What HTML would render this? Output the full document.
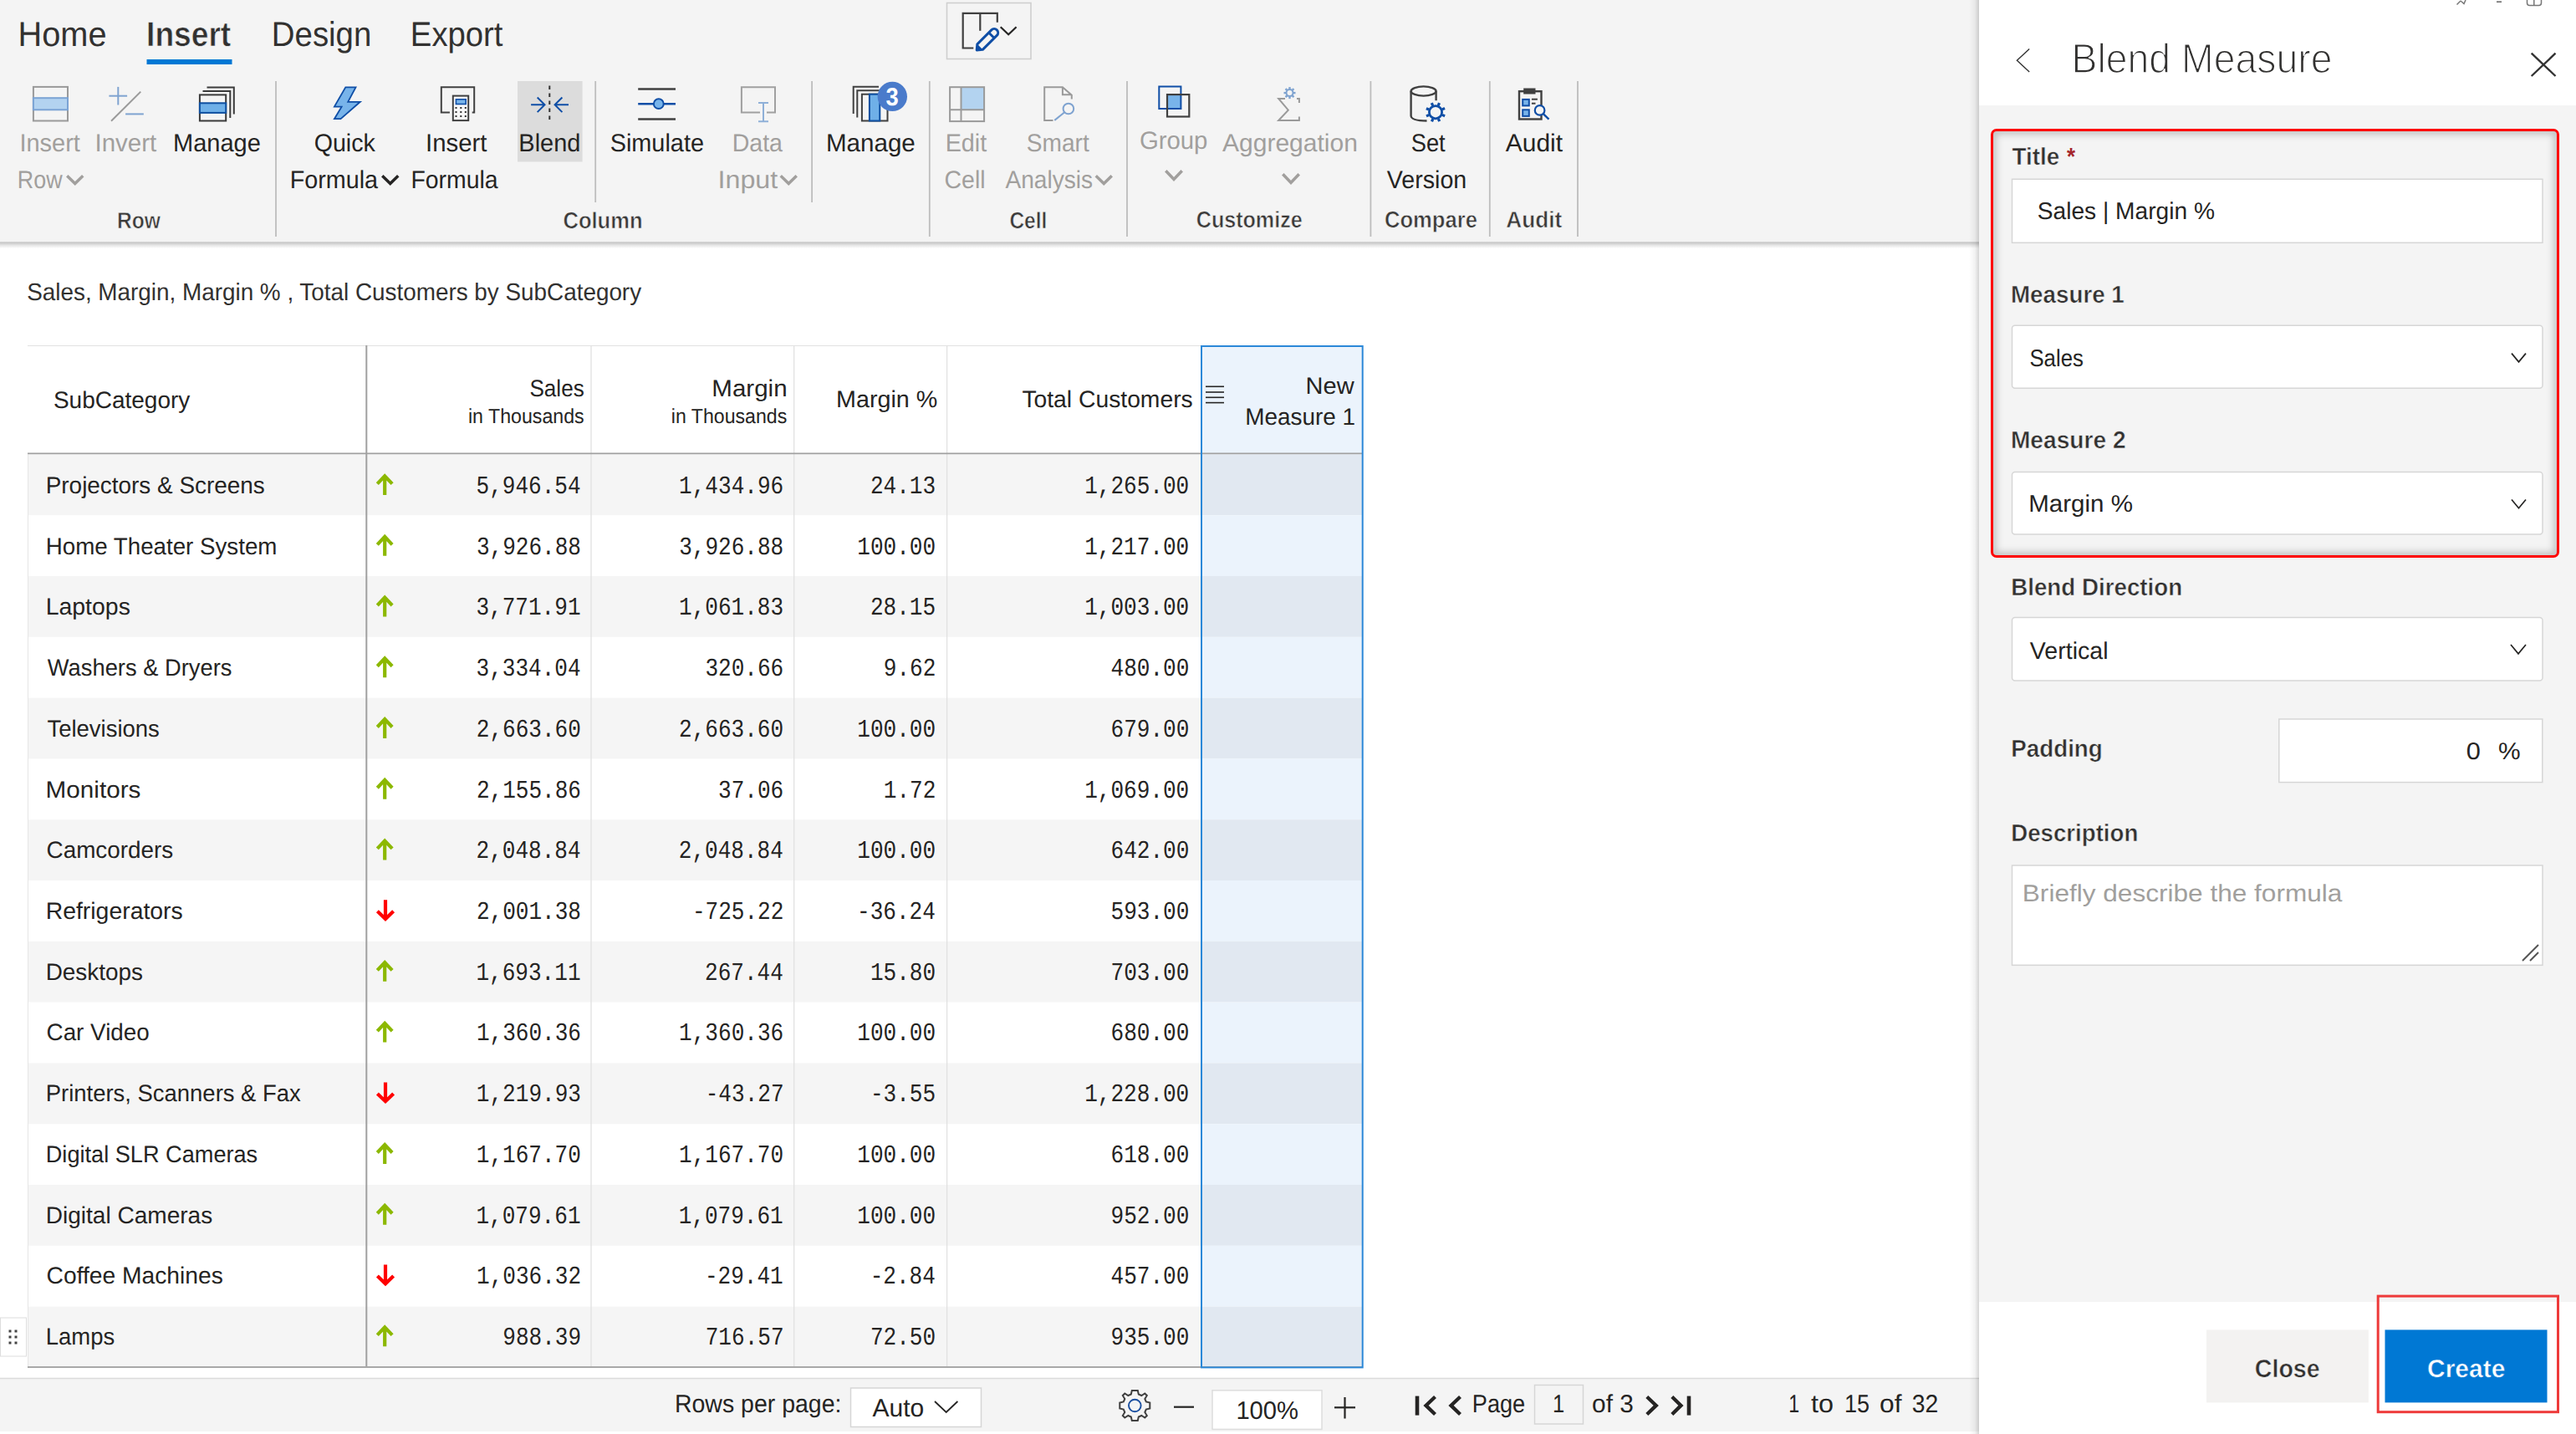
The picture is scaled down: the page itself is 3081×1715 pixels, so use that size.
<!DOCTYPE html>
<html><head><meta charset="utf-8"><title>Blend Measure</title>
<style>
html,body{margin:0;padding:0;background:#fff;overflow:hidden;}
body{width:3081px;height:1715px;font-family:"Liberation Sans",sans-serif;}
svg{display:block;}
</style></head><body>
<svg width="3081" height="1715" viewBox="0 0 3081 1715" text-rendering="geometricPrecision">
<rect x="0.00" y="0.00" width="3081.00" height="1715.00" fill="#ffffff" />
<rect x="0.00" y="0.00" width="2367.00" height="289.00" fill="#f4f4f4" />
<defs><linearGradient id="rsh" x1="0" y1="0" x2="0" y2="1"><stop offset="0" stop-color="#d6d6d6"/><stop offset="0.2" stop-color="#cbcbcb"/><stop offset="0.55" stop-color="#e6e6e6"/><stop offset="1" stop-color="#ffffff"/></linearGradient><linearGradient id="psh" x1="0" y1="0" x2="1" y2="0"><stop offset="0" stop-color="#000000" stop-opacity="0"/><stop offset="0.6" stop-color="#000000" stop-opacity="0.05"/><stop offset="1" stop-color="#000000" stop-opacity="0.17"/></linearGradient><filter id="inset" x="-5%" y="-5%" width="110%" height="110%"><feGaussianBlur stdDeviation="4"/></filter></defs>
<rect x="0.00" y="289.00" width="2367.00" height="8.00" fill="url(#rsh)" />
<rect x="0.00" y="1648.00" width="2367.00" height="64.00" fill="#f4f4f4" />
<line x1="0.00" y1="1648.50" x2="2367.00" y2="1648.50" stroke="#dcdcdc" stroke-width="1.50" />
<text transform="translate(21.54 55.30) scale(0.9601 1.0000)" font-family='"Liberation Sans", sans-serif' font-size="41.40" font-weight="400" fill="#323130">Home</text>
<text transform="translate(175.11 55.30) scale(0.8971 1.0000)" font-family='"Liberation Sans", sans-serif' font-size="41.40" font-weight="700" fill="#323130" stroke="#f4f4f4" stroke-width="0.60">Insert</text>
<text transform="translate(324.85 55.30) scale(0.9268 1.0000)" font-family='"Liberation Sans", sans-serif' font-size="41.40" font-weight="400" fill="#323130">Design</text>
<text transform="translate(490.86 55.30) scale(0.9244 1.0000)" font-family='"Liberation Sans", sans-serif' font-size="41.40" font-weight="400" fill="#323130">Export</text>
<rect x="175.50" y="71.00" width="102.00" height="6.00" fill="#0078d4" />
<rect x="1132.50" y="3.50" width="100.50" height="67.00" fill="#f4f4f4" stroke="#cfcfcf" stroke-width="1.6"/>
<path d="M1164.3 57.5 H1151.7 V15.9 H1192.8 V26.8" stroke="#404040" stroke-width="2.20" fill="none" />
<path d="M1172.3 15.9 V36.8" stroke="#404040" stroke-width="2.20" fill="none" />
<g transform="translate(1182 46.2) rotate(-45)"><path d="M-14 -4.6 H10 A4.6 4.6 0 0 1 10 4.6 H-14 L-19.5 0 Z" fill="#f4f4f4" stroke="#0f4ea6" stroke-width="3" stroke-linejoin="round"/><path d="M-14 -4.6 L-19.5 0 L-14 4.6 Z" fill="#0f4ea6"/><line x1="5.5" y1="-4.6" x2="5.5" y2="4.6" stroke="#0f4ea6" stroke-width="3"/></g>
<path d="M1197.50 33.00 L1206.15 41.30 L1214.80 33.00" stroke="#252423" stroke-width="2.20" fill="none" stroke-linecap="square" stroke-linejoin="miter"/>
<text transform="translate(23.43 181.00) scale(0.9723 1.0000)" font-family='"Liberation Sans", sans-serif' font-size="29.80" font-weight="400" fill="#a19f9d">Insert</text>
<text transform="translate(20.80 225.00) scale(0.9018 1.0000)" font-family='"Liberation Sans", sans-serif' font-size="29.80" font-weight="400" fill="#a19f9d">Row</text>
<path d="M81.50 211.50 L89.75 219.60 L98.00 211.50" stroke="#a19f9d" stroke-width="3.50" fill="none" stroke-linecap="square" stroke-linejoin="miter"/>
<text transform="translate(113.49 181.00) scale(0.9891 1.0000)" font-family='"Liberation Sans", sans-serif' font-size="29.80" font-weight="400" fill="#a19f9d">Invert</text>
<text transform="translate(207.02 181.00) scale(0.9736 1.0000)" font-family='"Liberation Sans", sans-serif' font-size="29.80" font-weight="400" fill="#252423">Manage</text>
<text transform="translate(140.05 273.00) scale(0.8940 1.0000)" font-family='"Liberation Sans", sans-serif' font-size="27.50" font-weight="700" fill="#3b3a39" stroke="#f4f4f4" stroke-width="0.60">Row</text>
<line x1="330.00" y1="97.00" x2="330.00" y2="283.00" stroke="#bdbdbd" stroke-width="1.80" />
<rect x="619.00" y="97.00" width="77.60" height="96.50" fill="#dcdcdc" />
<text transform="translate(375.66 181.00) scale(0.9599 1.0000)" font-family='"Liberation Sans", sans-serif' font-size="29.80" font-weight="400" fill="#252423">Quick</text>
<text transform="translate(346.64 225.00) scale(0.9641 1.0000)" font-family='"Liberation Sans", sans-serif' font-size="29.80" font-weight="400" fill="#252423">Formula</text>
<path d="M458.50 211.50 L466.75 219.60 L475.00 211.50" stroke="#252423" stroke-width="3.50" fill="none" stroke-linecap="square" stroke-linejoin="miter"/>
<text transform="translate(509.10 181.00) scale(0.9849 1.0000)" font-family='"Liberation Sans", sans-serif' font-size="29.80" font-weight="400" fill="#252423">Insert</text>
<text transform="translate(491.47 225.00) scale(0.9529 1.0000)" font-family='"Liberation Sans", sans-serif' font-size="29.80" font-weight="400" fill="#252423">Formula</text>
<text transform="translate(620.33 181.00) scale(0.9715 1.0000)" font-family='"Liberation Sans", sans-serif' font-size="29.80" font-weight="400" fill="#252423">Blend</text>
<text transform="translate(673.45 273.00) scale(0.9294 1.0000)" font-family='"Liberation Sans", sans-serif' font-size="27.50" font-weight="700" fill="#3b3a39" stroke="#f4f4f4" stroke-width="0.60">Column</text>
<line x1="712.20" y1="97.00" x2="712.20" y2="242.00" stroke="#bdbdbd" stroke-width="1.80" />
<text transform="translate(729.67 181.00) scale(0.9685 1.0000)" font-family='"Liberation Sans", sans-serif' font-size="29.80" font-weight="400" fill="#252423">Simulate</text>
<text transform="translate(875.66 181.00) scale(0.9588 1.0000)" font-family='"Liberation Sans", sans-serif' font-size="29.80" font-weight="400" fill="#a19f9d">Data</text>
<text transform="translate(858.53 225.00) scale(1.0817 1.0000)" font-family='"Liberation Sans", sans-serif' font-size="29.80" font-weight="400" fill="#a19f9d">Input</text>
<path d="M935.00 211.50 L943.25 219.60 L951.50 211.50" stroke="#a19f9d" stroke-width="3.50" fill="none" stroke-linecap="square" stroke-linejoin="miter"/>
<line x1="971.10" y1="97.00" x2="971.10" y2="242.00" stroke="#bdbdbd" stroke-width="1.80" />
<text transform="translate(987.98 181.00) scale(0.9919 1.0000)" font-family='"Liberation Sans", sans-serif' font-size="29.80" font-weight="400" fill="#252423">Manage</text>
<line x1="1111.80" y1="97.00" x2="1111.80" y2="283.00" stroke="#bdbdbd" stroke-width="1.80" />
<text transform="translate(1130.64 181.00) scale(0.9652 1.0000)" font-family='"Liberation Sans", sans-serif' font-size="29.80" font-weight="400" fill="#a19f9d">Edit</text>
<text transform="translate(1129.55 225.00) scale(0.9555 1.0000)" font-family='"Liberation Sans", sans-serif' font-size="29.80" font-weight="400" fill="#a19f9d">Cell</text>
<text transform="translate(1227.71 181.00) scale(0.9436 1.0000)" font-family='"Liberation Sans", sans-serif' font-size="29.80" font-weight="400" fill="#a19f9d">Smart</text>
<text transform="translate(1202.44 225.00) scale(0.9423 1.0000)" font-family='"Liberation Sans", sans-serif' font-size="29.80" font-weight="400" fill="#a19f9d">Analysis</text>
<path d="M1312.00 211.50 L1320.25 219.60 L1328.50 211.50" stroke="#a19f9d" stroke-width="3.50" fill="none" stroke-linecap="square" stroke-linejoin="miter"/>
<text transform="translate(1207.40 273.00) scale(0.8911 1.0000)" font-family='"Liberation Sans", sans-serif' font-size="27.50" font-weight="700" fill="#3b3a39" stroke="#f4f4f4" stroke-width="0.60">Cell</text>
<line x1="1348.00" y1="97.00" x2="1348.00" y2="283.00" stroke="#bdbdbd" stroke-width="1.80" />
<text transform="translate(1362.93 178.00) scale(0.9841 1.0000)" font-family='"Liberation Sans", sans-serif' font-size="29.80" font-weight="400" fill="#a19f9d">Group</text>
<path d="M1395.50 205.50 L1404.00 214.50 L1412.50 205.50" stroke="#a19f9d" stroke-width="3.50" fill="none" stroke-linecap="square" stroke-linejoin="miter"/>
<text transform="translate(1461.94 180.70) scale(1.0081 1.0000)" font-family='"Liberation Sans", sans-serif' font-size="29.80" font-weight="400" fill="#a19f9d">Aggregation</text>
<path d="M1535.50 209.50 L1544.00 218.50 L1552.50 209.50" stroke="#a19f9d" stroke-width="3.50" fill="none" stroke-linecap="square" stroke-linejoin="miter"/>
<text transform="translate(1430.77 271.70) scale(0.9126 1.0000)" font-family='"Liberation Sans", sans-serif' font-size="27.50" font-weight="700" fill="#3b3a39" stroke="#f4f4f4" stroke-width="0.60">Customize</text>
<line x1="1639.40" y1="97.00" x2="1639.40" y2="283.00" stroke="#bdbdbd" stroke-width="1.80" />
<text transform="translate(1687.75 181.00) scale(0.9154 1.0000)" font-family='"Liberation Sans", sans-serif' font-size="29.80" font-weight="400" fill="#252423">Set</text>
<text transform="translate(1658.86 225.00) scale(0.9599 1.0000)" font-family='"Liberation Sans", sans-serif' font-size="29.80" font-weight="400" fill="#252423">Version</text>
<text transform="translate(1655.95 272.00) scale(0.9306 1.0000)" font-family='"Liberation Sans", sans-serif' font-size="27.50" font-weight="700" fill="#3b3a39" stroke="#f4f4f4" stroke-width="0.60">Compare</text>
<line x1="1781.80" y1="97.00" x2="1781.80" y2="283.00" stroke="#bdbdbd" stroke-width="1.80" />
<text transform="translate(1800.74 181.00) scale(1.0052 1.0000)" font-family='"Liberation Sans", sans-serif' font-size="29.80" font-weight="400" fill="#252423">Audit</text>
<text transform="translate(1801.34 272.00) scale(0.9531 1.0000)" font-family='"Liberation Sans", sans-serif' font-size="27.50" font-weight="700" fill="#3b3a39" stroke="#f4f4f4" stroke-width="0.60">Audit</text>
<line x1="1887.00" y1="97.00" x2="1887.00" y2="283.00" stroke="#bdbdbd" stroke-width="1.80" />
<rect x="39.90" y="103.90" width="41.10" height="40.60" fill="none" stroke="#9a9a9a" stroke-width="2"/>
<rect x="39.90" y="117.20" width="41.10" height="14.10" fill="#b3d3f0" stroke="#7ba3d4" stroke-width="2"/>
<line x1="130.40" y1="114.70" x2="152.10" y2="114.70" stroke="#7fa3d0" stroke-width="2.00" />
<line x1="141.30" y1="103.90" x2="141.30" y2="125.50" stroke="#7fa3d0" stroke-width="2.00" />
<line x1="133.00" y1="144.70" x2="168.30" y2="109.60" stroke="#9a9a9a" stroke-width="2.00" />
<line x1="150.10" y1="136.40" x2="171.80" y2="136.40" stroke="#7fa3d0" stroke-width="2.00" />
<path d="M247.5 104.6 H279.8 V136.4" stroke="#3a3a3a" stroke-width="2.00" fill="none" />
<path d="M242.5 109.1 H275.3 V140.9" stroke="#3a3a3a" stroke-width="2.00" fill="none" />
<rect x="238.90" y="113.40" width="31.30" height="31.10" fill="#f4f4f4" stroke="#3a3a3a" stroke-width="2"/>
<rect x="238.90" y="123.30" width="31.30" height="11.60" fill="#6fb0e8" stroke="#0e4fa0" stroke-width="2"/>
<path d="M413.3 104.3 L425.5 104.3 L416.2 121.8 L430.8 121.8 L407.5 142.2 L399.9 142.2 L408.6 127.6 L399.9 127.6 Z" stroke="#0f4ea6" stroke-width="1.80" fill="#78b4ea" stroke-linejoin="miter"/>
<path d="M537.9 134.5 H527.8 V104.2 H567.2 V134.5 H564.7" stroke="#404040" stroke-width="2.00" fill="none" />
<rect x="541.80" y="114.60" width="18.40" height="29.50" fill="#f8f8f8" stroke="#404040" stroke-width="2"/>
<rect x="545.40" y="118.80" width="11.80" height="5.70" fill="#78b4ea" stroke="#0f4ea6" stroke-width="1.6"/>
<rect x="544.50" y="128.00" width="2.00" height="2.00" fill="#333" />
<rect x="550.30" y="128.00" width="2.00" height="2.00" fill="#333" />
<rect x="555.80" y="128.00" width="2.00" height="2.00" fill="#333" />
<rect x="544.50" y="133.00" width="2.00" height="2.00" fill="#333" />
<rect x="550.30" y="133.00" width="2.00" height="2.00" fill="#333" />
<rect x="555.80" y="133.00" width="2.00" height="2.00" fill="#333" />
<rect x="544.50" y="138.00" width="2.00" height="2.00" fill="#333" />
<rect x="550.30" y="138.00" width="2.00" height="2.00" fill="#333" />
<rect x="555.80" y="138.00" width="2.00" height="2.00" fill="#333" />
<line x1="657.30" y1="102.60" x2="657.30" y2="145.70" stroke="#333" stroke-width="2.00" stroke-dasharray="4.4 4.6"/>
<path d="M635.1 125.3 H652 M642.7 116.5 L651.5 125.3 L642.7 134.1" stroke="#0f4ea6" stroke-width="2.00" fill="none" />
<path d="M680 125.3 H663.1 M672.4 116.5 L663.6 125.3 L672.4 134.1" stroke="#0f4ea6" stroke-width="2.00" fill="none" />
<line x1="763.20" y1="106.50" x2="808.00" y2="106.50" stroke="#404040" stroke-width="2.50" />
<line x1="763.20" y1="124.20" x2="808.00" y2="124.20" stroke="#0f4ea6" stroke-width="2.50" />
<circle cx="787.8" cy="124.2" r="5.9" fill="#78b4ea" stroke="#0f4ea6" stroke-width="2"/>
<line x1="763.20" y1="142.60" x2="808.00" y2="142.60" stroke="#404040" stroke-width="2.50" />
<path d="M909 134.4 H886.9 V104.2 H927 V134.4 H917" stroke="#a0a0a0" stroke-width="2.00" fill="none" />
<path d="M913 123 V145.3 M907 123 H919 M907 145.3 H919" stroke="#8fb0d8" stroke-width="2.00" fill="none" />
<path d="M1020.7 136 V103.7 H1051" stroke="#404040" stroke-width="2.00" fill="none" />
<path d="M1025.3 140.5 V108.2 H1055" stroke="#404040" stroke-width="2.00" fill="none" />
<rect x="1030.90" y="112.70" width="30.60" height="31.80" fill="#f4f4f4" stroke="#404040" stroke-width="2"/>
<rect x="1039.90" y="112.70" width="12.40" height="31.80" fill="#6fb0e8" stroke="#0e4fa0" stroke-width="2"/>
<circle cx="1067.3" cy="115.4" r="17.7" fill="#4a7bcb"/>
<text transform="translate(1059.57 126.00) scale(0.9121 1.0000)" font-family='"Liberation Sans", sans-serif' font-size="30.00" font-weight="700" fill="#ffffff">3</text>
<rect x="1149.50" y="104.20" width="27.60" height="27.00" fill="#b3d3f0" />
<rect x="1136.10" y="104.20" width="41.00" height="40.90" fill="none" stroke="#9a9a9a" stroke-width="2"/>
<line x1="1149.50" y1="104.20" x2="1149.50" y2="145.10" stroke="#9a9a9a" stroke-width="2.00" />
<line x1="1136.10" y1="131.20" x2="1177.10" y2="131.20" stroke="#9a9a9a" stroke-width="2.00" />
<path d="M1259.5 144.1 H1249.2 V104.2 H1270.9 L1281.8 113.8 V118.6 M1270.9 104.2 V113.3 H1281.8" stroke="#9a9a9a" stroke-width="2.00" fill="none" />
<circle cx="1277.9" cy="130" r="6.3" fill="none" stroke="#7fa3d0" stroke-width="2"/>
<line x1="1261.30" y1="143.90" x2="1273.20" y2="134.30" stroke="#7fa3d0" stroke-width="2.00" />
<rect x="1395.50" y="112.60" width="17.00" height="17.00" fill="#78b4ea" />
<rect x="1386.30" y="103.50" width="26.10" height="26.50" fill="none" stroke="#0f4ea6" stroke-width="2"/>
<rect x="1396.00" y="113.10" width="26.30" height="26.40" fill="none" stroke="#404040" stroke-width="2.2"/>
<path d="M1537 118 H1529.2 L1540.8 131.7 L1529.2 144 H1553.9 V139.5 M1553.9 123 V118 H1551" stroke="#9a9a9a" stroke-width="2.00" fill="none" />
<g transform="translate(1542.5 111.1)" fill="none" stroke="#7fa3d0"><circle r="4" stroke-width="2"/><line x1="0" y1="-4.5" x2="0" y2="-7" stroke-width="2.4" transform="rotate(0)"/><line x1="0" y1="-4.5" x2="0" y2="-7" stroke-width="2.4" transform="rotate(45)"/><line x1="0" y1="-4.5" x2="0" y2="-7" stroke-width="2.4" transform="rotate(90)"/><line x1="0" y1="-4.5" x2="0" y2="-7" stroke-width="2.4" transform="rotate(135)"/><line x1="0" y1="-4.5" x2="0" y2="-7" stroke-width="2.4" transform="rotate(180)"/><line x1="0" y1="-4.5" x2="0" y2="-7" stroke-width="2.4" transform="rotate(225)"/><line x1="0" y1="-4.5" x2="0" y2="-7" stroke-width="2.4" transform="rotate(270)"/><line x1="0" y1="-4.5" x2="0" y2="-7" stroke-width="2.4" transform="rotate(315)"/></g>
<ellipse cx="1702.6" cy="109" rx="15" ry="5.6" fill="none" stroke="#404040" stroke-width="2.4"/>
<path d="M1687.6 109 V138.5 Q1688 144.5 1706.5 144.5" stroke="#404040" stroke-width="2.40" fill="none" />
<path d="M1717.6 109 V120.2" stroke="#404040" stroke-width="2.40" fill="none" />
<g transform="translate(1717 134.2)" fill="none" stroke="#0f4ea6"><circle r="7.6" stroke-width="2.8"/><line x1="0" y1="-8.5" x2="0" y2="-12" stroke-width="3.2" transform="rotate(22)"/><line x1="0" y1="-8.5" x2="0" y2="-12" stroke-width="3.2" transform="rotate(67)"/><line x1="0" y1="-8.5" x2="0" y2="-12" stroke-width="3.2" transform="rotate(112)"/><line x1="0" y1="-8.5" x2="0" y2="-12" stroke-width="3.2" transform="rotate(157)"/><line x1="0" y1="-8.5" x2="0" y2="-12" stroke-width="3.2" transform="rotate(202)"/><line x1="0" y1="-8.5" x2="0" y2="-12" stroke-width="3.2" transform="rotate(247)"/><line x1="0" y1="-8.5" x2="0" y2="-12" stroke-width="3.2" transform="rotate(292)"/><line x1="0" y1="-8.5" x2="0" y2="-12" stroke-width="3.2" transform="rotate(337)"/></g>
<rect x="1817.00" y="109.20" width="26.50" height="33.30" fill="#f4f4f4" stroke="#404040" stroke-width="2.4"/>
<rect x="1822.20" y="105.50" width="14.30" height="7.00" fill="#404040" />
<rect x="1821.20" y="118.90" width="7.60" height="7.50" fill="#78b4ea" stroke="#0f4ea6" stroke-width="2"/>
<rect x="1821.20" y="131.30" width="7.60" height="7.60" fill="#78b4ea" stroke="#0f4ea6" stroke-width="2"/>
<line x1="1831.90" y1="118.70" x2="1838.90" y2="118.70" stroke="#404040" stroke-width="2.00" />
<line x1="1831.90" y1="123.70" x2="1836.50" y2="123.70" stroke="#404040" stroke-width="2.00" />
<circle cx="1841.6" cy="131.9" r="5.8" fill="#f4f4f4" stroke="#0f4ea6" stroke-width="2.2"/>
<line x1="1845.80" y1="136.10" x2="1852.50" y2="142.70" stroke="#0f4ea6" stroke-width="2.40" />
<text transform="translate(32.22 359.20) scale(0.9605 1.0000)" font-family='"Liberation Sans", sans-serif' font-size="29.00" font-weight="400" fill="#323130">Sales, Margin, Margin % , Total Customers by SubCategory</text>
<rect x="33.00" y="543.40" width="1403.00" height="72.80" fill="#f5f5f5" />
<rect x="1436.00" y="543.40" width="194.00" height="72.80" fill="#e1e8f1" />
<rect x="1436.00" y="616.20" width="194.00" height="72.80" fill="#ebf3fc" />
<rect x="33.00" y="689.00" width="1403.00" height="72.80" fill="#f5f5f5" />
<rect x="1436.00" y="689.00" width="194.00" height="72.80" fill="#e1e8f1" />
<rect x="1436.00" y="761.80" width="194.00" height="72.80" fill="#ebf3fc" />
<rect x="33.00" y="834.60" width="1403.00" height="72.80" fill="#f5f5f5" />
<rect x="1436.00" y="834.60" width="194.00" height="72.80" fill="#e1e8f1" />
<rect x="1436.00" y="907.40" width="194.00" height="72.80" fill="#ebf3fc" />
<rect x="33.00" y="980.20" width="1403.00" height="72.80" fill="#f5f5f5" />
<rect x="1436.00" y="980.20" width="194.00" height="72.80" fill="#e1e8f1" />
<rect x="1436.00" y="1053.00" width="194.00" height="72.80" fill="#ebf3fc" />
<rect x="33.00" y="1125.80" width="1403.00" height="72.80" fill="#f5f5f5" />
<rect x="1436.00" y="1125.80" width="194.00" height="72.80" fill="#e1e8f1" />
<rect x="1436.00" y="1198.60" width="194.00" height="72.80" fill="#ebf3fc" />
<rect x="33.00" y="1271.40" width="1403.00" height="72.80" fill="#f5f5f5" />
<rect x="1436.00" y="1271.40" width="194.00" height="72.80" fill="#e1e8f1" />
<rect x="1436.00" y="1344.20" width="194.00" height="72.80" fill="#ebf3fc" />
<rect x="33.00" y="1417.00" width="1403.00" height="72.80" fill="#f5f5f5" />
<rect x="1436.00" y="1417.00" width="194.00" height="72.80" fill="#e1e8f1" />
<rect x="1436.00" y="1489.80" width="194.00" height="72.80" fill="#ebf3fc" />
<rect x="33.00" y="1562.60" width="1403.00" height="72.80" fill="#f5f5f5" />
<rect x="1436.00" y="1562.60" width="194.00" height="72.80" fill="#e1e8f1" />
<rect x="1436.00" y="413.00" width="194.00" height="130.40" fill="#ebf3fc" />
<line x1="33.00" y1="413.50" x2="1436.00" y2="413.50" stroke="#e1e1e1" stroke-width="1.20" />
<line x1="707.00" y1="413.00" x2="707.00" y2="1635.40" stroke="#e1e1e1" stroke-width="1.30" />
<line x1="949.70" y1="413.00" x2="949.70" y2="1635.40" stroke="#e1e1e1" stroke-width="1.30" />
<line x1="1132.60" y1="413.00" x2="1132.60" y2="1635.40" stroke="#e1e1e1" stroke-width="1.30" />
<line x1="33.50" y1="543.40" x2="33.50" y2="1635.40" stroke="#e6e6e6" stroke-width="1.00" />
<line x1="438.30" y1="413.00" x2="438.30" y2="1635.40" stroke="#a0a0a0" stroke-width="2.00" />
<line x1="33.00" y1="542.40" x2="1630.00" y2="542.40" stroke="#a0a0a0" stroke-width="1.60" />
<line x1="33.00" y1="1634.90" x2="1630.00" y2="1634.90" stroke="#a8a8a8" stroke-width="2.00" />
<rect x="1437.00" y="414.00" width="192.70" height="1221.40" fill="none" stroke="#2b88d8" stroke-width="2"/>
<text transform="translate(63.91 487.50) scale(0.9930 1.0000)" font-family='"Liberation Sans", sans-serif' font-size="28.20" font-weight="400" fill="#252423">SubCategory</text>
<text transform="translate(633.40 474.00) scale(0.9265 1.0000)" font-family='"Liberation Sans", sans-serif' font-size="28.20" font-weight="400" fill="#252423">Sales</text>
<text transform="translate(559.95 506.00) scale(0.9457 1.0000)" font-family='"Liberation Sans", sans-serif' font-size="24.50" font-weight="400" fill="#252423">in Thousands</text>
<text transform="translate(851.28 474.00) scale(1.0480 1.0000)" font-family='"Liberation Sans", sans-serif' font-size="28.20" font-weight="400" fill="#252423">Margin</text>
<text transform="translate(802.85 506.00) scale(0.9436 1.0000)" font-family='"Liberation Sans", sans-serif' font-size="24.50" font-weight="400" fill="#252423">in Thousands</text>
<text transform="translate(1000.04 487.20) scale(1.0188 1.0000)" font-family='"Liberation Sans", sans-serif' font-size="28.20" font-weight="400" fill="#252423">Margin %</text>
<text transform="translate(1222.38 487.20) scale(1.0034 1.0000)" font-family='"Liberation Sans", sans-serif' font-size="28.20" font-weight="400" fill="#252423">Total Customers</text>
<line x1="1442.00" y1="462.30" x2="1464.00" y2="462.30" stroke="#252423" stroke-width="1.60" />
<line x1="1442.00" y1="469.00" x2="1464.00" y2="469.00" stroke="#252423" stroke-width="1.60" />
<line x1="1442.00" y1="475.30" x2="1464.00" y2="475.30" stroke="#252423" stroke-width="1.60" />
<line x1="1442.00" y1="481.60" x2="1464.00" y2="481.60" stroke="#252423" stroke-width="1.60" />
<text transform="translate(1561.62 470.70) scale(1.0287 1.0000)" font-family='"Liberation Sans", sans-serif' font-size="28.20" font-weight="400" fill="#252423">New</text>
<text transform="translate(1489.31 507.70) scale(0.9890 1.0000)" font-family='"Liberation Sans", sans-serif' font-size="28.20" font-weight="400" fill="#252423">Measure 1</text>
<text transform="translate(54.71 589.90) scale(0.9898 1.0000)" font-family='"Liberation Sans", sans-serif' font-size="28.20" font-weight="400" fill="#252423">Projectors &amp; Screens</text>
<path d="M460.2 570.90 V592.10 M451.3 578.60 L460.2 569.20 L469.1 578.60" stroke="#8cb800" stroke-width="4.20" fill="none" stroke-linejoin="miter"/>
<text transform="translate(569.55 589.90) scale(0.8570 1)" font-family='"Liberation Mono", monospace' font-size="30.40" font-weight="400" fill="#252423">5,946.54</text>
<text transform="translate(812.11 589.90) scale(0.8570 1)" font-family='"Liberation Mono", monospace' font-size="30.40" font-weight="400" fill="#252423">1,434.96</text>
<text transform="translate(1040.98 589.90) scale(0.8570 1)" font-family='"Liberation Mono", monospace' font-size="30.40" font-weight="400" fill="#252423">24.13</text>
<text transform="translate(1297.21 589.90) scale(0.8570 1)" font-family='"Liberation Mono", monospace' font-size="30.40" font-weight="400" fill="#252423">1,265.00</text>
<text transform="translate(54.73 662.62) scale(0.9830 1.0000)" font-family='"Liberation Sans", sans-serif' font-size="28.20" font-weight="400" fill="#252423">Home Theater System</text>
<path d="M460.2 643.62 V664.82 M451.3 651.32 L460.2 641.92 L469.1 651.32" stroke="#8cb800" stroke-width="4.20" fill="none" stroke-linejoin="miter"/>
<text transform="translate(569.94 662.62) scale(0.8570 1)" font-family='"Liberation Mono", monospace' font-size="30.40" font-weight="400" fill="#252423">3,926.88</text>
<text transform="translate(812.14 662.62) scale(0.8570 1)" font-family='"Liberation Mono", monospace' font-size="30.40" font-weight="400" fill="#252423">3,926.88</text>
<text transform="translate(1025.30 662.62) scale(0.8570 1)" font-family='"Liberation Mono", monospace' font-size="30.40" font-weight="400" fill="#252423">100.00</text>
<text transform="translate(1297.21 662.62) scale(0.8570 1)" font-family='"Liberation Mono", monospace' font-size="30.40" font-weight="400" fill="#252423">1,217.00</text>
<text transform="translate(54.67 735.34) scale(1.0089 1.0000)" font-family='"Liberation Sans", sans-serif' font-size="28.20" font-weight="400" fill="#252423">Laptops</text>
<path d="M460.2 716.34 V737.54 M451.3 724.04 L460.2 714.64 L469.1 724.04" stroke="#8cb800" stroke-width="4.20" fill="none" stroke-linejoin="miter"/>
<text transform="translate(569.47 735.34) scale(0.8570 1)" font-family='"Liberation Mono", monospace' font-size="30.40" font-weight="400" fill="#252423">3,771.91</text>
<text transform="translate(812.06 735.34) scale(0.8570 1)" font-family='"Liberation Mono", monospace' font-size="30.40" font-weight="400" fill="#252423">1,061.83</text>
<text transform="translate(1040.98 735.34) scale(0.8570 1)" font-family='"Liberation Mono", monospace' font-size="30.40" font-weight="400" fill="#252423">28.15</text>
<text transform="translate(1297.21 735.34) scale(0.8570 1)" font-family='"Liberation Mono", monospace' font-size="30.40" font-weight="400" fill="#252423">1,003.00</text>
<text transform="translate(56.86 808.06) scale(0.9688 1.0000)" font-family='"Liberation Sans", sans-serif' font-size="28.20" font-weight="400" fill="#252423">Washers &amp; Dryers</text>
<path d="M460.2 789.06 V810.26 M451.3 796.76 L460.2 787.36 L469.1 796.76" stroke="#8cb800" stroke-width="4.20" fill="none" stroke-linejoin="miter"/>
<text transform="translate(569.55 808.06) scale(0.8570 1)" font-family='"Liberation Mono", monospace' font-size="30.40" font-weight="400" fill="#252423">3,334.04</text>
<text transform="translate(843.40 808.06) scale(0.8570 1)" font-family='"Liberation Mono", monospace' font-size="30.40" font-weight="400" fill="#252423">320.66</text>
<text transform="translate(1056.82 808.06) scale(0.8570 1)" font-family='"Liberation Mono", monospace' font-size="30.40" font-weight="400" fill="#252423">9.62</text>
<text transform="translate(1328.50 808.06) scale(0.8570 1)" font-family='"Liberation Mono", monospace' font-size="30.40" font-weight="400" fill="#252423">480.00</text>
<text transform="translate(56.40 880.78) scale(0.9751 1.0000)" font-family='"Liberation Sans", sans-serif' font-size="28.20" font-weight="400" fill="#252423">Televisions</text>
<path d="M460.2 861.78 V882.98 M451.3 869.48 L460.2 860.08 L469.1 869.48" stroke="#8cb800" stroke-width="4.20" fill="none" stroke-linejoin="miter"/>
<text transform="translate(569.81 880.78) scale(0.8570 1)" font-family='"Liberation Mono", monospace' font-size="30.40" font-weight="400" fill="#252423">2,663.60</text>
<text transform="translate(812.01 880.78) scale(0.8570 1)" font-family='"Liberation Mono", monospace' font-size="30.40" font-weight="400" fill="#252423">2,663.60</text>
<text transform="translate(1025.30 880.78) scale(0.8570 1)" font-family='"Liberation Mono", monospace' font-size="30.40" font-weight="400" fill="#252423">100.00</text>
<text transform="translate(1328.50 880.78) scale(0.8570 1)" font-family='"Liberation Mono", monospace' font-size="30.40" font-weight="400" fill="#252423">679.00</text>
<text transform="translate(54.56 953.50) scale(1.0532 1.0000)" font-family='"Liberation Sans", sans-serif' font-size="28.20" font-weight="400" fill="#252423">Monitors</text>
<path d="M460.2 934.50 V955.70 M451.3 942.20 L460.2 932.80 L469.1 942.20" stroke="#8cb800" stroke-width="4.20" fill="none" stroke-linejoin="miter"/>
<text transform="translate(569.91 953.50) scale(0.8570 1)" font-family='"Liberation Mono", monospace' font-size="30.40" font-weight="400" fill="#252423">2,155.86</text>
<text transform="translate(859.04 953.50) scale(0.8570 1)" font-family='"Liberation Mono", monospace' font-size="30.40" font-weight="400" fill="#252423">37.06</text>
<text transform="translate(1056.82 953.50) scale(0.8570 1)" font-family='"Liberation Mono", monospace' font-size="30.40" font-weight="400" fill="#252423">1.72</text>
<text transform="translate(1297.21 953.50) scale(0.8570 1)" font-family='"Liberation Mono", monospace' font-size="30.40" font-weight="400" fill="#252423">1,069.00</text>
<text transform="translate(55.58 1026.22) scale(0.9873 1.0000)" font-family='"Liberation Sans", sans-serif' font-size="28.20" font-weight="400" fill="#252423">Camcorders</text>
<path d="M460.2 1007.22 V1028.42 M451.3 1014.92 L460.2 1005.52 L469.1 1014.92" stroke="#8cb800" stroke-width="4.20" fill="none" stroke-linejoin="miter"/>
<text transform="translate(569.55 1026.22) scale(0.8570 1)" font-family='"Liberation Mono", monospace' font-size="30.40" font-weight="400" fill="#252423">2,048.84</text>
<text transform="translate(811.75 1026.22) scale(0.8570 1)" font-family='"Liberation Mono", monospace' font-size="30.40" font-weight="400" fill="#252423">2,048.84</text>
<text transform="translate(1025.30 1026.22) scale(0.8570 1)" font-family='"Liberation Mono", monospace' font-size="30.40" font-weight="400" fill="#252423">100.00</text>
<text transform="translate(1328.50 1026.22) scale(0.8570 1)" font-family='"Liberation Mono", monospace' font-size="30.40" font-weight="400" fill="#252423">642.00</text>
<text transform="translate(54.67 1098.94) scale(1.0071 1.0000)" font-family='"Liberation Sans", sans-serif' font-size="28.20" font-weight="400" fill="#252423">Refrigerators</text>
<path d="M461 1076.24 V1097.14 M451.4 1089.74 L461 1099.04 L470.6 1089.74" stroke="#ff0000" stroke-width="4.20" fill="none" stroke-linejoin="miter"/>
<text transform="translate(569.94 1098.94) scale(0.8570 1)" font-family='"Liberation Mono", monospace' font-size="30.40" font-weight="400" fill="#252423">2,001.38</text>
<text transform="translate(827.90 1098.94) scale(0.8570 1)" font-family='"Liberation Mono", monospace' font-size="30.40" font-weight="400" fill="#252423">-725.22</text>
<text transform="translate(1025.04 1098.94) scale(0.8570 1)" font-family='"Liberation Mono", monospace' font-size="30.40" font-weight="400" fill="#252423">-36.24</text>
<text transform="translate(1328.50 1098.94) scale(0.8570 1)" font-family='"Liberation Mono", monospace' font-size="30.40" font-weight="400" fill="#252423">593.00</text>
<text transform="translate(54.71 1171.66) scale(0.9894 1.0000)" font-family='"Liberation Sans", sans-serif' font-size="28.20" font-weight="400" fill="#252423">Desktops</text>
<path d="M460.2 1152.66 V1173.86 M451.3 1160.36 L460.2 1150.96 L469.1 1160.36" stroke="#8cb800" stroke-width="4.20" fill="none" stroke-linejoin="miter"/>
<text transform="translate(569.47 1171.66) scale(0.8570 1)" font-family='"Liberation Mono", monospace' font-size="30.40" font-weight="400" fill="#252423">1,693.11</text>
<text transform="translate(843.04 1171.66) scale(0.8570 1)" font-family='"Liberation Mono", monospace' font-size="30.40" font-weight="400" fill="#252423">267.44</text>
<text transform="translate(1040.93 1171.66) scale(0.8570 1)" font-family='"Liberation Mono", monospace' font-size="30.40" font-weight="400" fill="#252423">15.80</text>
<text transform="translate(1328.50 1171.66) scale(0.8570 1)" font-family='"Liberation Mono", monospace' font-size="30.40" font-weight="400" fill="#252423">703.00</text>
<text transform="translate(55.58 1244.38) scale(0.9863 1.0000)" font-family='"Liberation Sans", sans-serif' font-size="28.20" font-weight="400" fill="#252423">Car Video</text>
<path d="M460.2 1225.38 V1246.58 M451.3 1233.08 L460.2 1223.68 L469.1 1233.08" stroke="#8cb800" stroke-width="4.20" fill="none" stroke-linejoin="miter"/>
<text transform="translate(569.91 1244.38) scale(0.8570 1)" font-family='"Liberation Mono", monospace' font-size="30.40" font-weight="400" fill="#252423">1,360.36</text>
<text transform="translate(812.11 1244.38) scale(0.8570 1)" font-family='"Liberation Mono", monospace' font-size="30.40" font-weight="400" fill="#252423">1,360.36</text>
<text transform="translate(1025.30 1244.38) scale(0.8570 1)" font-family='"Liberation Mono", monospace' font-size="30.40" font-weight="400" fill="#252423">100.00</text>
<text transform="translate(1328.50 1244.38) scale(0.8570 1)" font-family='"Liberation Mono", monospace' font-size="30.40" font-weight="400" fill="#252423">680.00</text>
<text transform="translate(54.75 1317.10) scale(0.9736 1.0000)" font-family='"Liberation Sans", sans-serif' font-size="28.20" font-weight="400" fill="#252423">Printers, Scanners &amp; Fax</text>
<path d="M461 1294.40 V1315.30 M451.4 1307.90 L461 1317.20 L470.6 1307.90" stroke="#ff0000" stroke-width="4.20" fill="none" stroke-linejoin="miter"/>
<text transform="translate(569.86 1317.10) scale(0.8570 1)" font-family='"Liberation Mono", monospace' font-size="30.40" font-weight="400" fill="#252423">1,219.93</text>
<text transform="translate(843.74 1317.10) scale(0.8570 1)" font-family='"Liberation Mono", monospace' font-size="30.40" font-weight="400" fill="#252423">-43.27</text>
<text transform="translate(1040.98 1317.10) scale(0.8570 1)" font-family='"Liberation Mono", monospace' font-size="30.40" font-weight="400" fill="#252423">-3.55</text>
<text transform="translate(1297.21 1317.10) scale(0.8570 1)" font-family='"Liberation Mono", monospace' font-size="30.40" font-weight="400" fill="#252423">1,228.00</text>
<text transform="translate(54.77 1389.82) scale(0.9629 1.0000)" font-family='"Liberation Sans", sans-serif' font-size="28.20" font-weight="400" fill="#252423">Digital SLR Cameras</text>
<path d="M460.2 1370.82 V1392.02 M451.3 1378.52 L460.2 1369.12 L469.1 1378.52" stroke="#8cb800" stroke-width="4.20" fill="none" stroke-linejoin="miter"/>
<text transform="translate(569.81 1389.82) scale(0.8570 1)" font-family='"Liberation Mono", monospace' font-size="30.40" font-weight="400" fill="#252423">1,167.70</text>
<text transform="translate(812.01 1389.82) scale(0.8570 1)" font-family='"Liberation Mono", monospace' font-size="30.40" font-weight="400" fill="#252423">1,167.70</text>
<text transform="translate(1025.30 1389.82) scale(0.8570 1)" font-family='"Liberation Mono", monospace' font-size="30.40" font-weight="400" fill="#252423">100.00</text>
<text transform="translate(1328.50 1389.82) scale(0.8570 1)" font-family='"Liberation Mono", monospace' font-size="30.40" font-weight="400" fill="#252423">618.00</text>
<text transform="translate(54.70 1462.54) scale(0.9951 1.0000)" font-family='"Liberation Sans", sans-serif' font-size="28.20" font-weight="400" fill="#252423">Digital Cameras</text>
<path d="M460.2 1443.54 V1464.74 M451.3 1451.24 L460.2 1441.84 L469.1 1451.24" stroke="#8cb800" stroke-width="4.20" fill="none" stroke-linejoin="miter"/>
<text transform="translate(569.47 1462.54) scale(0.8570 1)" font-family='"Liberation Mono", monospace' font-size="30.40" font-weight="400" fill="#252423">1,079.61</text>
<text transform="translate(811.67 1462.54) scale(0.8570 1)" font-family='"Liberation Mono", monospace' font-size="30.40" font-weight="400" fill="#252423">1,079.61</text>
<text transform="translate(1025.30 1462.54) scale(0.8570 1)" font-family='"Liberation Mono", monospace' font-size="30.40" font-weight="400" fill="#252423">100.00</text>
<text transform="translate(1328.50 1462.54) scale(0.8570 1)" font-family='"Liberation Mono", monospace' font-size="30.40" font-weight="400" fill="#252423">952.00</text>
<text transform="translate(55.56 1535.26) scale(1.0012 1.0000)" font-family='"Liberation Sans", sans-serif' font-size="28.20" font-weight="400" fill="#252423">Coffee Machines</text>
<path d="M461 1512.56 V1533.46 M451.4 1526.06 L461 1535.36 L470.6 1526.06" stroke="#ff0000" stroke-width="4.20" fill="none" stroke-linejoin="miter"/>
<text transform="translate(570.07 1535.26) scale(0.8570 1)" font-family='"Liberation Mono", monospace' font-size="30.40" font-weight="400" fill="#252423">1,036.32</text>
<text transform="translate(842.96 1535.26) scale(0.8570 1)" font-family='"Liberation Mono", monospace' font-size="30.40" font-weight="400" fill="#252423">-29.41</text>
<text transform="translate(1040.67 1535.26) scale(0.8570 1)" font-family='"Liberation Mono", monospace' font-size="30.40" font-weight="400" fill="#252423">-2.84</text>
<text transform="translate(1328.50 1535.26) scale(0.8570 1)" font-family='"Liberation Mono", monospace' font-size="30.40" font-weight="400" fill="#252423">457.00</text>
<text transform="translate(54.75 1607.98) scale(0.9742 1.0000)" font-family='"Liberation Sans", sans-serif' font-size="28.20" font-weight="400" fill="#252423">Lamps</text>
<path d="M460.2 1588.98 V1610.18 M451.3 1596.68 L460.2 1587.28 L469.1 1596.68" stroke="#8cb800" stroke-width="4.20" fill="none" stroke-linejoin="miter"/>
<text transform="translate(601.31 1607.98) scale(0.8570 1)" font-family='"Liberation Mono", monospace' font-size="30.40" font-weight="400" fill="#252423">988.39</text>
<text transform="translate(843.74 1607.98) scale(0.8570 1)" font-family='"Liberation Mono", monospace' font-size="30.40" font-weight="400" fill="#252423">716.57</text>
<text transform="translate(1040.93 1607.98) scale(0.8570 1)" font-family='"Liberation Mono", monospace' font-size="30.40" font-weight="400" fill="#252423">72.50</text>
<text transform="translate(1328.50 1607.98) scale(0.8570 1)" font-family='"Liberation Mono", monospace' font-size="30.40" font-weight="400" fill="#252423">935.00</text>
<rect x="0.50" y="1576.00" width="31.00" height="46.00" fill="#ffffff" stroke="#dddddd" stroke-width="1"/>
<rect x="10.50" y="1590.50" width="3.00" height="3.00" fill="#444" />
<rect x="17.50" y="1590.50" width="3.00" height="3.00" fill="#444" />
<rect x="10.50" y="1597.50" width="3.00" height="3.00" fill="#444" />
<rect x="17.50" y="1597.50" width="3.00" height="3.00" fill="#444" />
<rect x="10.50" y="1604.50" width="3.00" height="3.00" fill="#444" />
<rect x="17.50" y="1604.50" width="3.00" height="3.00" fill="#444" />
<text transform="translate(806.97 1688.50) scale(0.9491 1.0000)" font-family='"Liberation Sans", sans-serif' font-size="30.00" font-weight="400" fill="#252423">Rows per page:</text>
<rect x="1017.50" y="1660.00" width="156.00" height="46.50" fill="#ffffff" stroke="#d6d6d6" stroke-width="1.5"/>
<text transform="translate(1043.54 1694.00) scale(1.0002 1.0000)" font-family='"Liberation Sans", sans-serif' font-size="30.00" font-weight="400" fill="#252423">Auto</text>
<path d="M1118 1676 L1131.7 1689 L1145.4 1676" stroke="#252423" stroke-width="1.80" fill="none" />
<g transform="translate(1357.3 1681)"><path d="M0 -18 L3.5 -18 L4.5 -13.5 L8 -12 L12 -14.5 L14.5 -12 L12 -8 L13.5 -4.5 L18 -3.5 L18 3.5 L13.5 4.5 L12 8 L14.5 12 L12 14.5 L8 12 L4.5 13.5 L3.5 18 L-3.5 18 L-4.5 13.5 L-8 12 L-12 14.5 L-14.5 12 L-12 8 L-13.5 4.5 L-18 3.5 L-18 -3.5 L-13.5 -4.5 L-12 -8 L-14.5 -12 L-12 -14.5 L-8 -12 L-4.5 -13.5 L-3.5 -18 Z" fill="none" stroke="#404040" stroke-width="2"/><circle r="7.3" fill="none" stroke="#1a4fa0" stroke-width="1.9"/></g>
<line x1="1404.00" y1="1682.70" x2="1428.00" y2="1682.70" stroke="#252423" stroke-width="2.20" />
<rect x="1450.00" y="1662.80" width="131.00" height="46.60" fill="#ffffff" stroke="#dddddd" stroke-width="1.5"/>
<text transform="translate(1478.38 1696.50) scale(0.9730 1.0000)" font-family='"Liberation Sans", sans-serif' font-size="30.00" font-weight="400" fill="#252423">100%</text>
<line x1="1596.00" y1="1683.30" x2="1621.00" y2="1683.30" stroke="#252423" stroke-width="2.20" />
<line x1="1608.50" y1="1671.00" x2="1608.50" y2="1696.50" stroke="#252423" stroke-width="2.20" />
<line x1="1695.00" y1="1669.60" x2="1695.00" y2="1692.60" stroke="#252423" stroke-width="4.60" />
<path d="M1716.5 1670.5 L1705.5 1680.9 L1716.5 1691.5" stroke="#252423" stroke-width="4.30" fill="none" />
<path d="M1746.5 1670.5 L1735.5 1680.9 L1746.5 1691.5" stroke="#252423" stroke-width="4.30" fill="none" />
<text transform="translate(1760.77 1688.50) scale(0.9054 1.0000)" font-family='"Liberation Sans", sans-serif' font-size="30.00" font-weight="400" fill="#252423">Page</text>
<rect x="1835.50" y="1656.50" width="58.00" height="46.50" fill="#f4f4f4" stroke="#d6d6d6" stroke-width="1.5"/>
<text transform="translate(1857.06 1689.00) scale(0.8507 1.0000)" font-family='"Liberation Sans", sans-serif' font-size="30.00" font-weight="400" fill="#252423">1</text>
<text transform="translate(1904.05 1688.50) scale(0.9945 1.0000)" font-family='"Liberation Sans", sans-serif' font-size="30.00" font-weight="400" fill="#252423">of 3</text>
<path d="M1969.8 1670.5 L1980.8 1680.9 L1969.8 1691.5" stroke="#252423" stroke-width="4.30" fill="none" />
<path d="M1999.8 1670.5 L2010.5 1680.9 L1999.8 1691.5" stroke="#252423" stroke-width="4.30" fill="none" />
<line x1="2020.00" y1="1669.60" x2="2020.00" y2="1692.60" stroke="#252423" stroke-width="4.60" />
<text transform="translate(2139.24 1689.00) scale(0.7734 1.0000)" font-family='"Liberation Sans", sans-serif' font-size="30.00" font-weight="400" fill="#252423">1</text>
<text transform="translate(2166.01 1689.00) scale(1.0811 1.0000)" font-family='"Liberation Sans", sans-serif' font-size="30.00" font-weight="400" fill="#252423">to</text>
<text transform="translate(2205.94 1689.00) scale(0.9021 1.0000)" font-family='"Liberation Sans", sans-serif' font-size="30.00" font-weight="400" fill="#252423">15</text>
<text transform="translate(2248.07 1689.00) scale(1.0593 1.0000)" font-family='"Liberation Sans", sans-serif' font-size="30.00" font-weight="400" fill="#252423">of</text>
<text transform="translate(2286.72 1689.00) scale(0.9440 1.0000)" font-family='"Liberation Sans", sans-serif' font-size="30.00" font-weight="400" fill="#252423">32</text>
<rect x="2355.00" y="0.00" width="12.00" height="1715.00" fill="url(#psh)" />
<rect x="2367.00" y="0.00" width="714.00" height="1715.00" fill="#ffffff" />
<rect x="2367.00" y="126.00" width="714.00" height="1431.00" fill="#f4f4f4" />
<path d="M2938.5 5.5 L2943 1 M2943 1 L2947 4.5 L2949 0" stroke="#777" stroke-width="1.50" fill="none" />
<line x1="2986.00" y1="2.20" x2="2992.00" y2="2.20" stroke="#777" stroke-width="1.80" />
<rect x="3022.50" y="-5.00" width="17.00" height="11.50" fill="none" rx="3" stroke="#777" stroke-width="1.5"/>
<line x1="3030.80" y1="0.00" x2="3030.80" y2="6.50" stroke="#777" stroke-width="1.50" />
<path d="M2427.2 58.6 L2412.4 72.3 L2427.2 86.1" stroke="#333" stroke-width="1.40" fill="none" />
<text transform="translate(2477.49 86.60) scale(0.9338 1.0000)" font-family='"Liberation Sans", sans-serif' font-size="49.70" font-weight="400" fill="#323130" stroke="#ffffff" stroke-width="1.50">Blend Measure</text>
<path d="M3027.7 63.7 L3056.5 91 M3056.5 63.7 L3027.7 91" stroke="#333" stroke-width="2.40" fill="none" />
<clipPath id="rb"><rect x="2382.5" y="155.5" width="677" height="510" rx="5"/></clipPath>
<g clip-path="url(#rb)"><rect x="2382.5" y="155.5" width="677" height="510" rx="5" fill="none" stroke="#000" stroke-opacity="0.22" stroke-width="10" filter="url(#inset)"/></g>
<rect x="2382.50" y="155.50" width="677.00" height="510.00" fill="none" rx="5.5" stroke="#ff0000" stroke-width="3"/>
<text transform="translate(2406.39 197.00) scale(0.9607 1.0000)" font-family='"Liberation Sans", sans-serif' font-size="29.00" font-weight="700" fill="#323130" stroke="#f4f4f4" stroke-width="0.50">Title</text>
<text transform="translate(2471.92 197.00) scale(0.8957 1.0000)" font-family='"Liberation Sans", sans-serif' font-size="29.00" font-weight="700" fill="#a4262c">*</text>
<rect x="2406.50" y="214.30" width="634.50" height="76.00" fill="#ffffff" stroke="#d6d6d6" stroke-width="1.5"/>
<text transform="translate(2436.70 262.30) scale(0.9844 1.0000)" font-family='"Liberation Sans", sans-serif' font-size="28.60" font-weight="400" fill="#252423">Sales | Margin %</text>
<text transform="translate(2404.94 361.90) scale(0.9577 1.0000)" font-family='"Liberation Sans", sans-serif' font-size="29.00" font-weight="700" fill="#323130" stroke="#f4f4f4" stroke-width="0.50">Measure 1</text>
<rect x="2406.50" y="389.30" width="634.50" height="75.00" fill="#ffffff" rx="3.5" stroke="#d6d6d6" stroke-width="1.5"/>
<text transform="translate(2427.41 437.60) scale(0.9020 1.0000)" font-family='"Liberation Sans", sans-serif' font-size="28.60" font-weight="400" fill="#252423">Sales</text>
<path d="M3004 422.6 L3012.5 432.8 L3021 422.6" stroke="#252423" stroke-width="1.70" fill="none" />
<text transform="translate(2404.91 536.40) scale(0.9709 1.0000)" font-family='"Liberation Sans", sans-serif' font-size="29.00" font-weight="700" fill="#323130" stroke="#f4f4f4" stroke-width="0.50">Measure 2</text>
<rect x="2406.50" y="564.50" width="634.50" height="74.50" fill="#ffffff" rx="3.5" stroke="#d6d6d6" stroke-width="1.5"/>
<text transform="translate(2426.18 612.00) scale(1.0335 1.0000)" font-family='"Liberation Sans", sans-serif' font-size="28.60" font-weight="400" fill="#252423">Margin %</text>
<path d="M3004 597.5 L3012.5 607.7 L3021 597.5" stroke="#252423" stroke-width="1.70" fill="none" />
<text transform="translate(2405.14 712.00) scale(0.9569 1.0000)" font-family='"Liberation Sans", sans-serif' font-size="29.00" font-weight="700" fill="#323130" stroke="#f4f4f4" stroke-width="0.50">Blend Direction</text>
<rect x="2406.50" y="738.50" width="634.50" height="75.50" fill="#ffffff" rx="3.5" stroke="#d6d6d6" stroke-width="1.5"/>
<text transform="translate(2427.86 787.70) scale(0.9998 1.0000)" font-family='"Liberation Sans", sans-serif' font-size="28.60" font-weight="400" fill="#252423">Vertical</text>
<path d="M3003 771 L3012 781.8 L3021 771" stroke="#252423" stroke-width="1.70" fill="none" />
<text transform="translate(2405.14 904.80) scale(0.9591 1.0000)" font-family='"Liberation Sans", sans-serif' font-size="29.00" font-weight="700" fill="#323130" stroke="#f4f4f4" stroke-width="0.50">Padding</text>
<rect x="2725.80" y="860.00" width="315.00" height="75.60" fill="#ffffff" stroke="#d6d6d6" stroke-width="1.5"/>
<text transform="translate(2949.80 908.40) scale(1.0753 1.0000)" font-family='"Liberation Sans", sans-serif' font-size="28.60" font-weight="400" fill="#252423">0</text>
<text transform="translate(2987.92 908.40) scale(1.0472 1.0000)" font-family='"Liberation Sans", sans-serif' font-size="28.60" font-weight="400" fill="#252423">%</text>
<text transform="translate(2405.15 1006.30) scale(0.9539 1.0000)" font-family='"Liberation Sans", sans-serif' font-size="29.00" font-weight="700" fill="#323130" stroke="#f4f4f4" stroke-width="0.50">Description</text>
<rect x="2406.50" y="1035.00" width="634.50" height="119.30" fill="#ffffff" stroke="#d6d6d6" stroke-width="1.5"/>
<text transform="translate(2418.81 1078.00) scale(1.1041 1.0000)" font-family='"Liberation Sans", sans-serif' font-size="28.60" font-weight="400" fill="#a19f9d">Briefly describe the formula</text>
<path d="M3017 1149 L3036 1130 M3026 1149 L3036 1139" stroke="#555" stroke-width="2.00" fill="none" />
<rect x="2639.00" y="1590.40" width="193.80" height="87.00" fill="#f3f2f1" />
<text transform="translate(2696.83 1647.00) scale(0.9517 1.0000)" font-family='"Liberation Sans", sans-serif' font-size="30.00" font-weight="700" fill="#323130" stroke="#f4f4f4" stroke-width="0.50">Close</text>
<rect x="2852.50" y="1590.40" width="194.00" height="87.00" fill="#0078d4" />
<text transform="translate(2903.07 1647.00) scale(0.9985 1.0000)" font-family='"Liberation Sans", sans-serif' font-size="30.00" font-weight="700" fill="#ffffff" stroke="#0078d4" stroke-width="0.50">Create</text>
<rect x="2844.20" y="1550.10" width="215.30" height="138.60" fill="none" stroke="#ee3a3a" stroke-width="3"/>
</svg>
</body></html>
